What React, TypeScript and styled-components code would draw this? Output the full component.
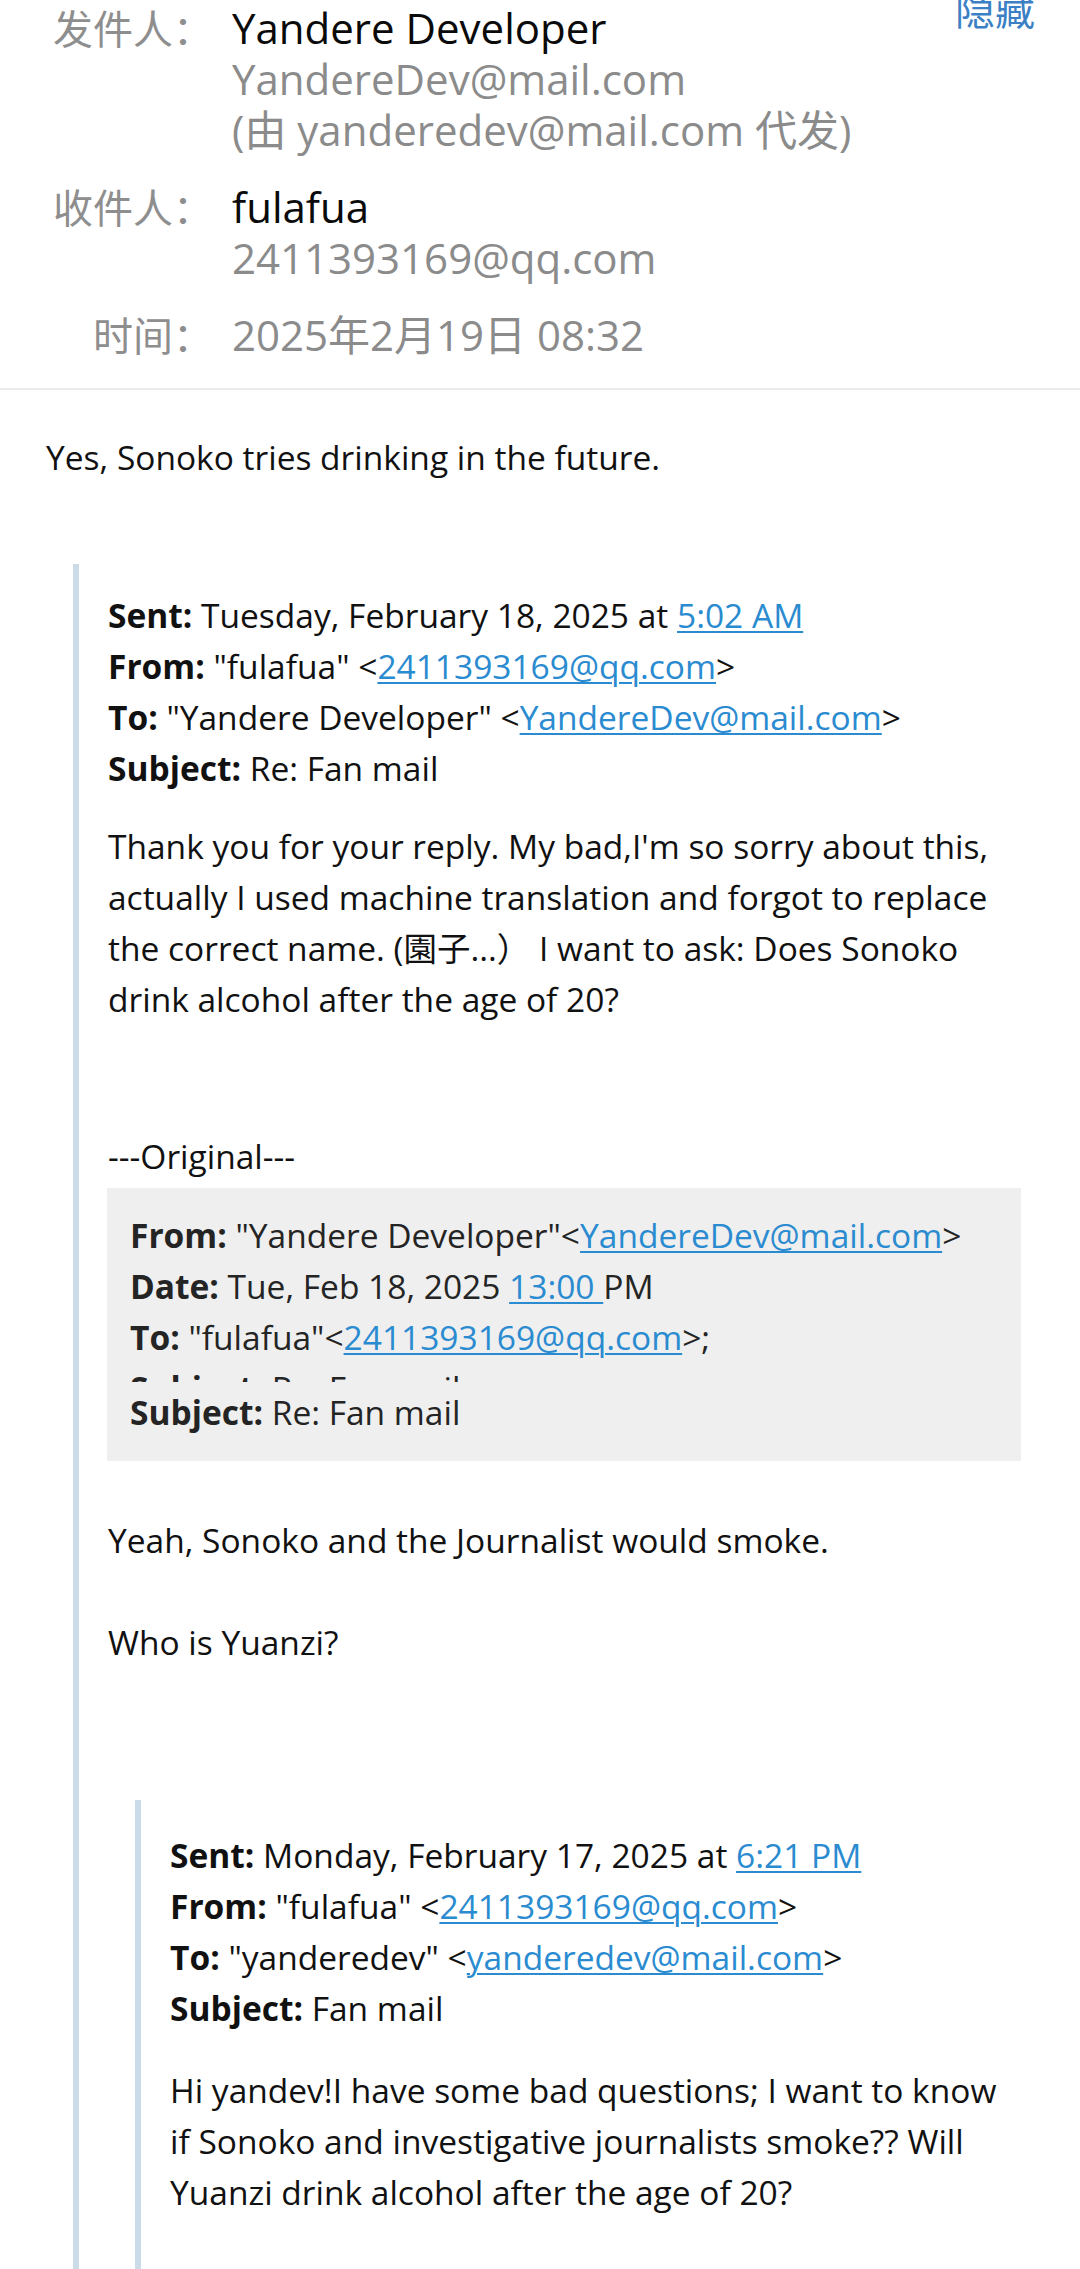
import React from "react";
import styled, { createGlobalStyle } from "styled-components";

const GlobalStyle = createGlobalStyle`
  html, body {
    margin: 0;
    padding: 0;
    background: #ffffff;
  }
  body {
    font-family: "Open Sans", "Noto Sans CJK SC", sans-serif;
    color: #111111;
  }
`;

const Page = styled.div`
  width: 1080px;
  height: 2269px;
  overflow: hidden;
  background: #ffffff;
`;

/* ---------- header ---------- */

const Header = styled.header`
  display: flex;
  align-items: flex-start;
  padding: 2px 45px 28px 53px;
  border-bottom: 2px solid #ebebeb;
`;

const Fields = styled.div`
  flex: 1;
  display: grid;
  grid-template-columns: 160px 1fr;
  column-gap: 19px;
  row-gap: 26px;
  align-items: baseline;
`;

const Label = styled.div`
  text-align: right;
  font-family: "Noto Sans CJK SC", sans-serif;
  font-size: 40px;
  line-height: 51px;
  color: #8e8e8e;
  white-space: nowrap;
`;

const Values = styled.div`
  display: flex;
  flex-direction: column;
`;

const Value = styled.div<{ $muted?: boolean }>`
  font-family: "Open Sans", "Noto Sans CJK SC", sans-serif;
  font-size: 42px;
  line-height: 51px;
  color: ${(p) => (p.$muted ? "#8b8b8b" : "#0a0a0a")};
  white-space: nowrap;
`;

const HideButton = styled.button`
  border: none;
  background: none;
  padding: 0;
  margin-top: -14px;
  font-family: "Noto Sans CJK SC", sans-serif;
  font-size: 40px;
  line-height: 40px;
  color: #3b7fc4;
  cursor: pointer;
`;

/* ---------- body ---------- */

const Body = styled.main`
  padding: 0 59px 0 46px;
`;

const Para = styled.p<{ $gap?: number }>`
  margin: ${(p) => p.$gap ?? 0}px 0 0;
  font-size: 33.5px;
  line-height: 51px;
  color: #111111;
`;

const Quote = styled.blockquote<{ $gap: number; $top: number }>`
  margin: ${(p) => p.$gap}px 0 0 27px;
  padding: ${(p) => p.$top}px 0 600px 29px;
  border-left: 6px solid #cbdbe8;
`;

const Meta = styled.div`
  display: flex;
  flex-direction: column;
`;

const MetaLine = styled.div`
  font-size: 33.5px;
  line-height: 51px;
  white-space: nowrap;
`;

const Key = styled.b`
  font-weight: 700;
`;

const Link = styled.a`
  color: #2a8bd0;
  text-decoration: underline;
  text-decoration-thickness: 2px;
  text-underline-offset: 3px;
`;

const OriginalBox = styled.div`
  margin: 6px 0 0 -1px;
  padding: 22px 24px 23px 23px;
  background: #efefef;
  color: #242424;
`;

const ClippedLine = styled.div`
  height: 19px;
  overflow: hidden;
  margin-bottom: 5px;
`;

const Email = ({ addr }: { addr: string }) => <Link href={`mailto:${addr}`}>{addr}</Link>;

export default function App() {
  return (
    <Page>
      <GlobalStyle />
      <Header>
        <Fields>
          <Label>发件人：</Label>
          <Values>
            <Value>Yandere Developer</Value>
            <Value $muted>YandereDev@mail.com</Value>
            <Value $muted>(由 yanderedev@mail.com 代发)</Value>
          </Values>
          <Label>收件人：</Label>
          <Values>
            <Value>fulafua</Value>
            <Value $muted>2411393169@qq.com</Value>
          </Values>
          <Label>时间：</Label>
          <Values>
            <Value $muted>2025年2月19日 08:32</Value>
          </Values>
        </Fields>
        <HideButton>隐藏</HideButton>
      </Header>

      <Body>
        <Para $gap={42}>Yes, Sonoko tries drinking in the future.</Para>

        <Quote $gap={81} $top={26}>
          <Meta>
            <MetaLine>
              <Key>Sent:</Key> Tuesday, February 18, 2025 at <Link href="#">5:02 AM</Link>
            </MetaLine>
            <MetaLine>
              <Key>From:</Key> "fulafua" &lt;<Email addr="2411393169@qq.com" />&gt;
            </MetaLine>
            <MetaLine>
              <Key>To:</Key> "Yandere Developer" &lt;<Email addr="YandereDev@mail.com" />&gt;
            </MetaLine>
            <MetaLine>
              <Key>Subject:</Key> Re: Fan mail
            </MetaLine>
          </Meta>

          <Para $gap={27}>
            Thank you for your reply. My bad,I'm so sorry about this, actually I used machine translation and
            forgot to replace the correct name. (園子...） I want to ask: Does Sonoko drink alcohol after the age
            of 20?
          </Para>

          <Para $gap={106}>---Original---</Para>

          <OriginalBox>
            <MetaLine>
              <Key>From:</Key> "Yandere Developer"&lt;<Email addr="YandereDev@mail.com" />&gt;
            </MetaLine>
            <MetaLine>
              <Key>Date:</Key> Tue, Feb 18, 2025 <Link href="#">13:00 </Link>PM
            </MetaLine>
            <MetaLine>
              <Key>To:</Key> "fulafua"&lt;<Email addr="2411393169@qq.com" />&gt;;
            </MetaLine>
            <ClippedLine aria-hidden="true">
              <MetaLine>
                <Key>Subject:</Key> Re: Fan mail
              </MetaLine>
            </ClippedLine>
            <MetaLine>
              <Key>Subject:</Key> Re: Fan mail
            </MetaLine>
          </OriginalBox>

          <Para $gap={54}>Yeah, Sonoko and the Journalist would smoke.</Para>
          <Para $gap={51}>Who is Yuanzi?</Para>

          <Quote $gap={132} $top={30}>
            <Meta>
              <MetaLine>
                <Key>Sent:</Key> Monday, February 17, 2025 at <Link href="#">6:21 PM</Link>
              </MetaLine>
              <MetaLine>
                <Key>From:</Key> "fulafua" &lt;<Email addr="2411393169@qq.com" />&gt;
              </MetaLine>
              <MetaLine>
                <Key>To:</Key> "yanderedev" &lt;<Email addr="yanderedev@mail.com" />&gt;
              </MetaLine>
              <MetaLine>
                <Key>Subject:</Key> Fan mail
              </MetaLine>
            </Meta>
            <Para $gap={31}>
              Hi yandev!I have some bad questions; I want to know if Sonoko and investigative journalists
              smoke?? Will Yuanzi drink alcohol after the age of 20?
            </Para>
          </Quote>
        </Quote>
      </Body>
    </Page>
  );
}
